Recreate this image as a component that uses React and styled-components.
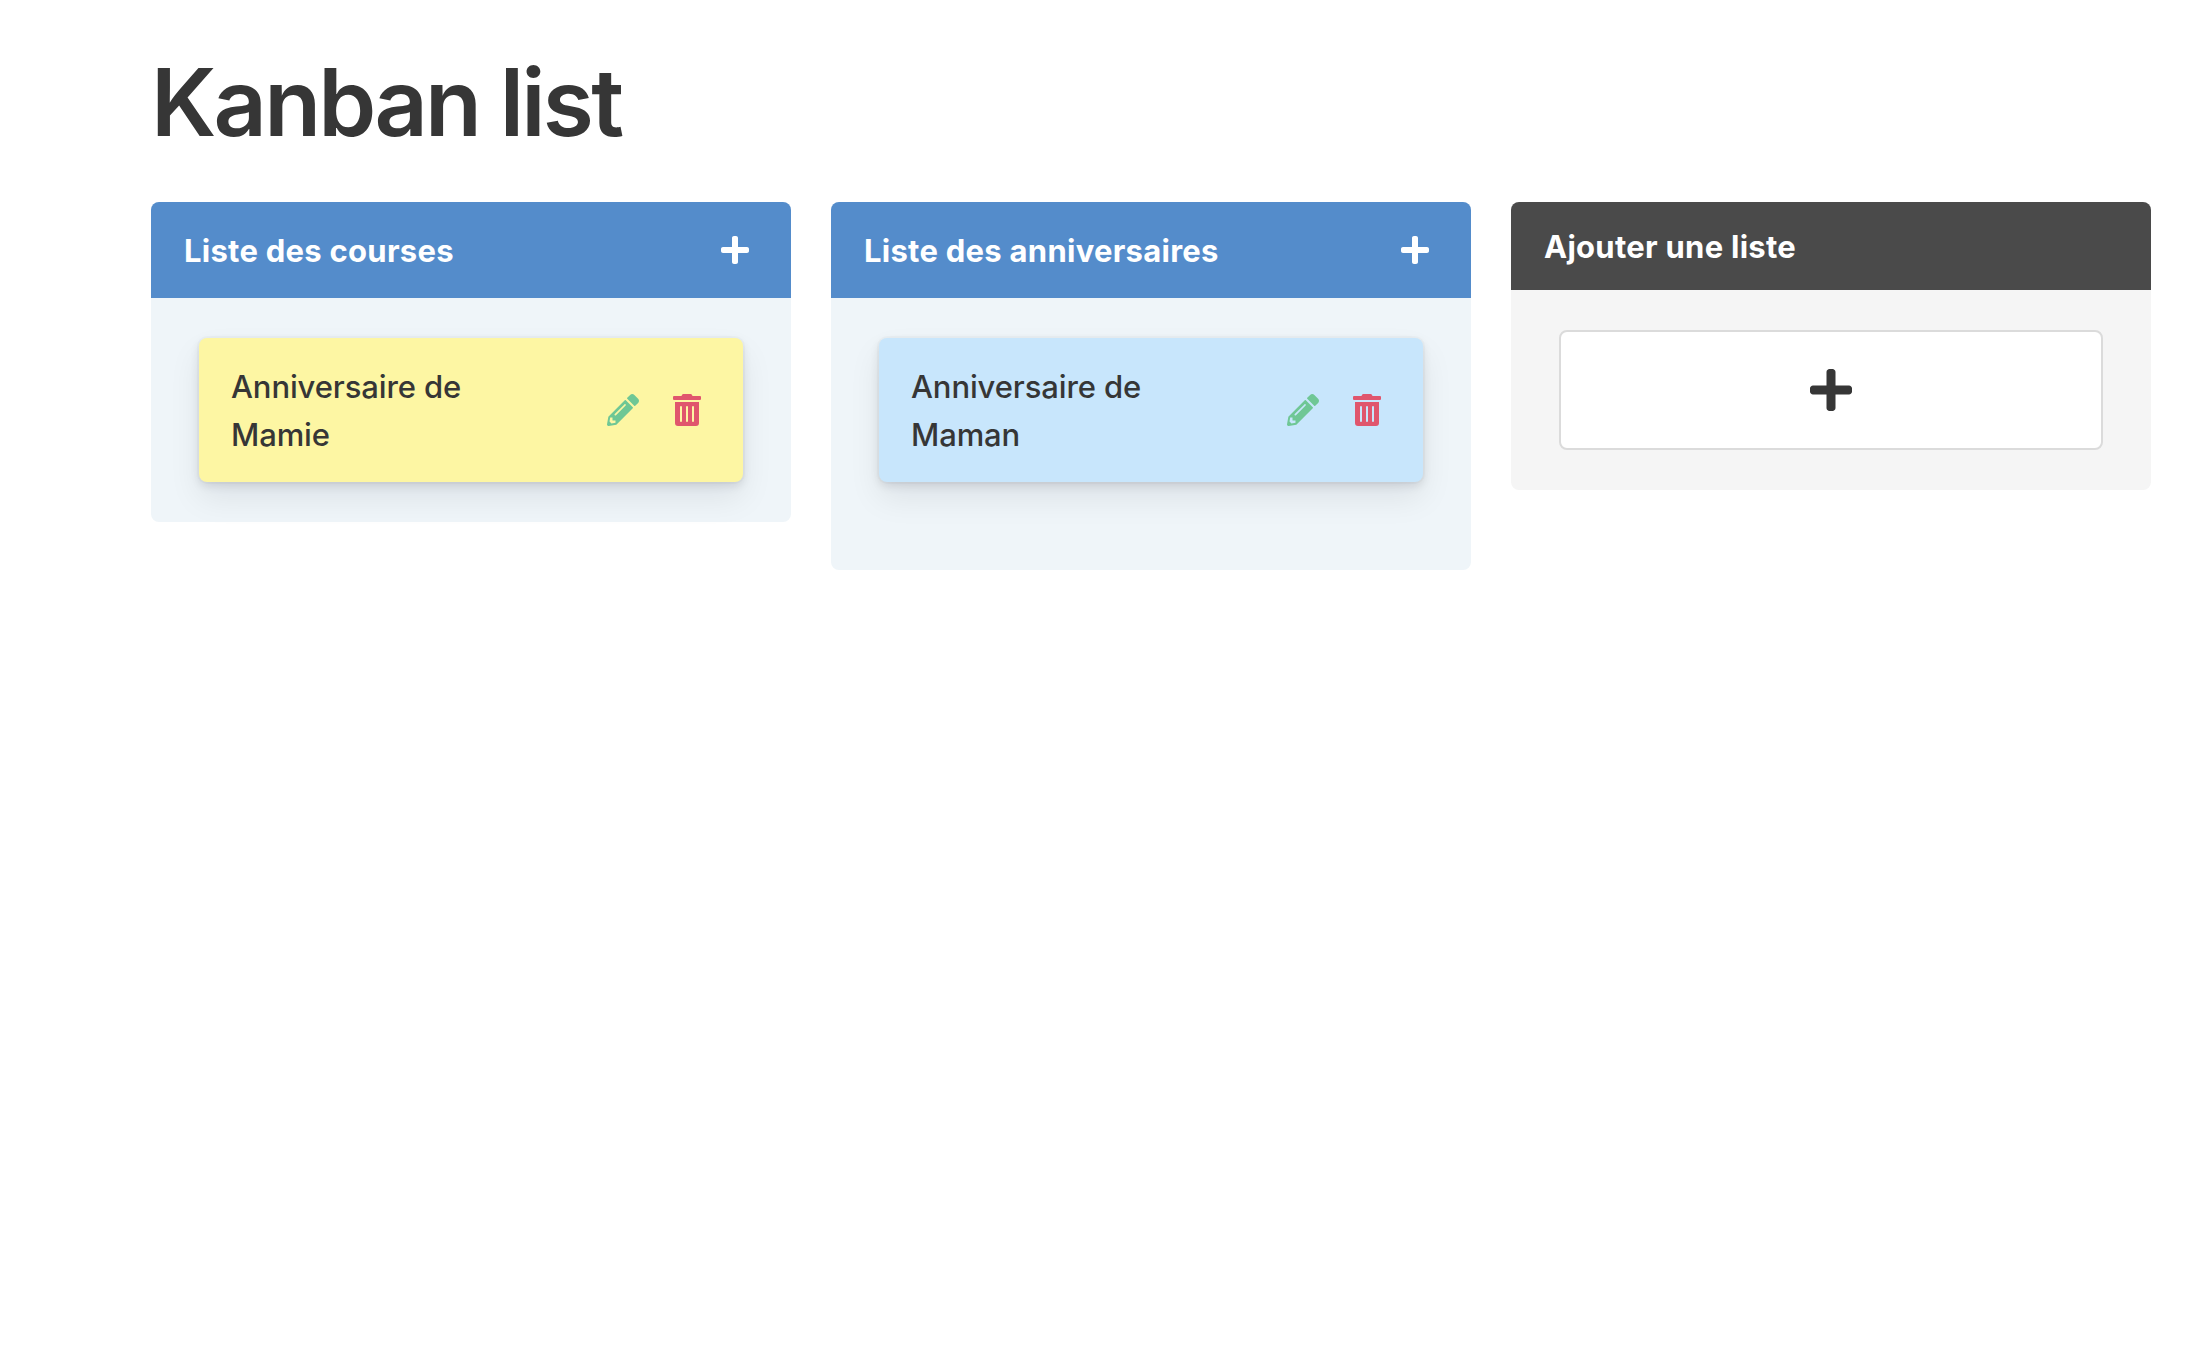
import React from "react";
import styled, { createGlobalStyle } from "styled-components";
import { FaPlus, FaPencilAlt, FaTrashAlt } from "react-icons/fa";

const GlobalStyle = createGlobalStyle`
  *, *::before, *::after { box-sizing: border-box; }
  body { margin: 0; background: #fff; }
  body, button { font-family: Inter, "Liberation Sans", sans-serif; color: #363636; }
`;

const Page = styled.main`
  padding: 48px 35px 0 151px;
`;

const Title = styled.h1`
  margin: 0 0 46px;
  font-size: 93px;
  font-weight: 600;
  line-height: 108px;
  letter-spacing: -2.8px;
`;

const Board = styled.div`
  display: grid;
  grid-template-columns: repeat(3, 640px);
  align-items: start;
  gap: 40px;
`;

const Panel = styled.section`
  border-radius: 8px;
  background: ${(p) => (p.$dark ? "#f5f5f5" : "#eff5f9")};
`;

const PanelHeader = styled.header`
  display: flex;
  align-items: center;
  justify-content: space-between;
  height: ${(p) => (p.$dark ? 88 : 96)}px;
  padding: 0 40px 0 33px;
  border-radius: 8px 8px 0 0;
  background: ${(p) => (p.$dark ? "#4a4a4a" : "#548ccb")};
  color: #fff;
`;

const PanelTitle = styled.h2`
  margin: 0;
  padding-top: 2px;
  font-size: 31px;
  font-weight: 700;
  line-height: 40px;
  letter-spacing: 0.27px;
`;

const PanelBody = styled.div`
  padding: 40px 48px ${(p) => p.$bottom || 40}px;
`;

const IconButton = styled.button`
  display: flex;
  padding: 0;
  border: 0;
  background: none;
  color: ${(p) => p.$color};
  font-size: 32px;
`;

const Card = styled.article`
  display: flex;
  align-items: center;
  justify-content: space-between;
  height: 144px;
  padding: 24px 40px 24px 32px;
  border-radius: 8px;
  background: ${(p) => p.$color};
  box-shadow: 0 0 0 2px rgba(10, 10, 20, 0.02), 0 4px 10px rgba(10, 10, 20, 0.1), 0 16px 32px rgba(10, 10, 20, 0.08);
`;

const CardText = styled.p`
  width: 300px;
  margin: 0;
  padding-top: 2px;
  font-size: 31px;
  font-weight: 450;
  line-height: 48px;
  letter-spacing: -0.12px;
`;

const Actions = styled.div`
  display: flex;
  gap: 32px;
`;

const AddButton = styled.button`
  display: flex;
  align-items: center;
  justify-content: center;
  width: 100%;
  height: 120px;
  border: 2px solid #dbdbdb;
  border-radius: 8px;
  background: #fff;
  font-size: 48px;
`;

const lists = [
  { name: "Liste des courses", card: "Anniversaire de Mamie", color: "#fdf6a3" },
  { name: "Liste des anniversaires", card: "Anniversaire de Maman", color: "#c8e6fc", bottom: 88 },
];

function List({ list }) {
  return (
    <Panel>
      <PanelHeader>
        <PanelTitle>{list.name}</PanelTitle>
        <IconButton $color="#fff"><FaPlus /></IconButton>
      </PanelHeader>
      <PanelBody $bottom={list.bottom}>
        <Card $color={list.color}>
          <CardText>{list.card}</CardText>
          <Actions>
            <IconButton $color="#6fc795"><FaPencilAlt /></IconButton>
            <IconButton $color="#e0566d"><FaTrashAlt /></IconButton>
          </Actions>
        </Card>
      </PanelBody>
    </Panel>
  );
}

export default function App() {
  return (
    <>
      <GlobalStyle />
      <Page>
        <Title>Kanban list</Title>
        <Board>
          {lists.map((list) => <List key={list.name} list={list} />)}
          <Panel $dark>
            <PanelHeader $dark><PanelTitle>Ajouter une liste</PanelTitle></PanelHeader>
            <PanelBody>
              <AddButton><FaPlus /></AddButton>
            </PanelBody>
          </Panel>
        </Board>
      </Page>
    </>
  );
}
